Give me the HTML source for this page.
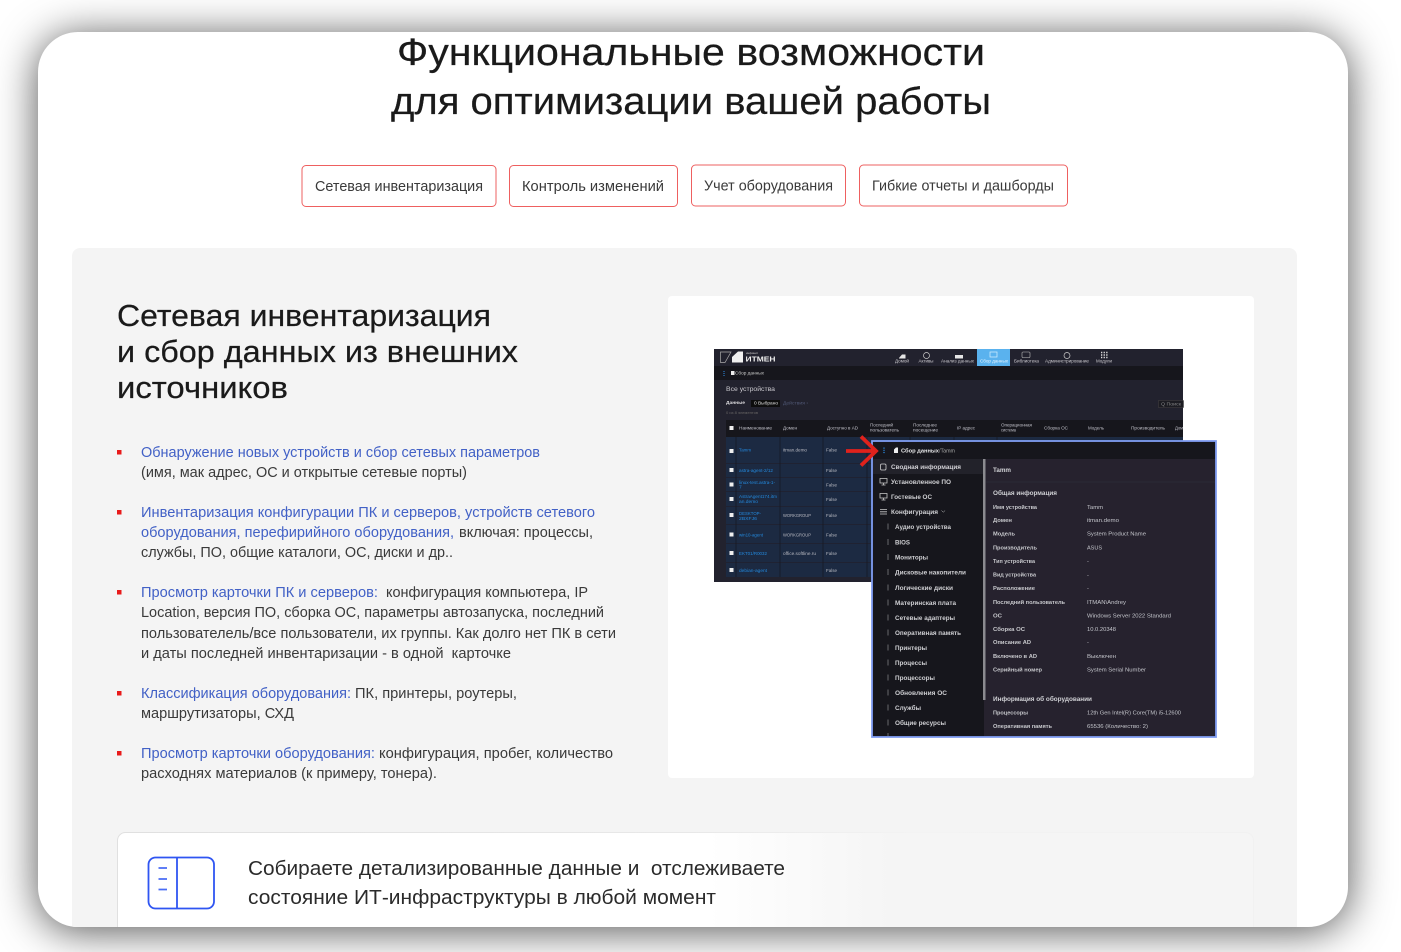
<!DOCTYPE html>
<html lang="ru"><head><meta charset="utf-8"><title>Функциональные возможности</title>
<style>
html,body{margin:0;padding:0;width:1401px;height:952px;overflow:hidden;background:#fff}
#card{position:absolute;left:38px;top:32px;width:1310px;height:895px;border-radius:40px;background:#fff;box-shadow:0 4px 42px rgba(0,0,0,.68)}
svg{position:absolute;left:0;top:0}
text{font-family:"Liberation Sans","Noto Sans CJK SC",sans-serif}
.h{fill:#1a1a1a;stroke:#1a1a1a;stroke-width:.22}
.t{font-size:14.5px;fill:#3a3a3a}
.b{font-size:14.5px;fill:#4261c6}
.s{font-size:6.4px;fill:#cfcfd3;font-weight:700}
.l{font-size:5.6px;fill:#c8c8cc;font-weight:700}
.v{font-size:5.7px;fill:#c4c4ca}
.m{font-size:4.6px;fill:#c8c8ce}
.th{font-size:4.4px;fill:#c0c0c8}
.r{font-size:4.9px;fill:#2488dc}
.c{font-size:4.9px;fill:#b8b8c0}
</style></head><body>
<div id="card"></div>
<svg width="1401" height="952" viewBox="0 0 1401 952" xmlns="http://www.w3.org/2000/svg">
<defs>
<clipPath id="cc"><rect x="38" y="32" width="1310" height="895" rx="40"/></clipPath>
<linearGradient id="fd" x1="0" x2="1" y1="0" y2="0"><stop offset="0" stop-color="#fff"/><stop offset=".52" stop-color="#fff"/><stop offset=".68" stop-color="#f5f5f5"/><stop offset="1" stop-color="#f5f5f5"/></linearGradient>
<linearGradient id="fs" x1="0" x2="1" y1="0" y2="0"><stop offset="0" stop-color="#e0e0e0"/><stop offset=".5" stop-color="#e8e8e8"/><stop offset=".7" stop-color="#f3f3f3"/><stop offset="1" stop-color="#f1f1f1"/></linearGradient>
<filter id="bl" x="-2%" y="-2%" width="104%" height="104%"><feGaussianBlur stdDeviation=".36"/></filter>
</defs>
<g clip-path="url(#cc)">
<rect x="72" y="248" width="1225" height="700" rx="8" fill="#f4f4f4"/>
<rect x="668" y="296" width="586" height="482" rx="4" fill="#fff"/>
<rect x="117.500" y="832.500" width="1136" height="120" rx="8" fill="url(#fd)" stroke="url(#fs)"/>
</g>

<!-- Title -->
<text class="h" x="397" y="65" font-size="38" textLength="588" lengthAdjust="spacingAndGlyphs">Функциональные возможности</text>
<text class="h" x="391" y="114" font-size="38" textLength="600" lengthAdjust="spacingAndGlyphs">для оптимизации вашей работы</text>

<!-- Tabs -->
<g fill="#fff" stroke="#ee6060" stroke-width="1">
<rect x="302" y="165.500" width="194" height="41" rx="4"/>
<rect x="509.500" y="165.500" width="168" height="41" rx="4"/>
<rect x="691.500" y="165" width="154" height="41" rx="4"/>
<rect x="859.500" y="165" width="208" height="41" rx="4"/>
</g>
<g font-size="14.500" fill="#3a3a3a">
<text x="315" y="191" textLength="168" lengthAdjust="spacingAndGlyphs">Сетевая инвентаризация</text>
<text x="522" y="191" textLength="142" lengthAdjust="spacingAndGlyphs">Контроль изменений</text>
<text x="704" y="190.500" textLength="129" lengthAdjust="spacingAndGlyphs">Учет оборудования</text>
<text x="872" y="190.500" textLength="182" lengthAdjust="spacingAndGlyphs">Гибкие отчеты и дашборды</text>
</g>

<!-- Section heading -->
<text class="h" x="117" y="326" font-size="31" textLength="374" lengthAdjust="spacingAndGlyphs">Сетевая инвентаризация</text>
<text class="h" x="117" y="362" font-size="31" textLength="401" lengthAdjust="spacingAndGlyphs">и сбор данных из внешних</text>
<text class="h" x="117" y="398" font-size="31" textLength="171" lengthAdjust="spacingAndGlyphs">источников</text>

<!-- Bullets -->
<g fill="#e81a1a">
<rect x="117" y="450" width="4.500" height="4.500"/>
<rect x="117" y="510" width="4.500" height="4.500"/>
<rect x="117" y="590" width="4.500" height="4.500"/>
<rect x="117" y="691" width="4.500" height="4.500"/>
<rect x="117" y="751" width="4.500" height="4.500"/>
</g>

<!-- List -->
<text class="b" x="141" y="457" textLength="399" lengthAdjust="spacingAndGlyphs">Обнаружение новых устройств и сбор сетевых параметров</text>
<text class="t" x="141" y="477" textLength="326" lengthAdjust="spacingAndGlyphs">(имя, мак адрес, ОС и открытые сетевые порты)</text>
<text class="b" x="141" y="517" textLength="454" lengthAdjust="spacingAndGlyphs">Инвентаризация конфигурации ПК и серверов, устройств сетевого</text>
<text class="b" x="141" y="537" textLength="313" lengthAdjust="spacingAndGlyphs">оборудования, перефирийного оборудования,</text>
<text class="t" x="459" y="537" textLength="134" lengthAdjust="spacingAndGlyphs">включая: процессы,</text>
<text class="t" x="141" y="557" textLength="312" lengthAdjust="spacingAndGlyphs">службы, ПО, общие каталоги, ОС, диски и др..</text>
<text class="b" x="141" y="597" textLength="237" lengthAdjust="spacingAndGlyphs">Просмотр карточки ПК и серверов:</text>
<text class="t" x="386" y="597" textLength="202" lengthAdjust="spacingAndGlyphs">конфигурация компьютера, IP</text>
<text class="t" x="141" y="617" textLength="463" lengthAdjust="spacingAndGlyphs">Location, версия ПО, сборка ОС, параметры автозапуска, последний</text>
<text class="t" x="141" y="638" textLength="475" lengthAdjust="spacingAndGlyphs">пользователель/все пользователи, их группы. Как долго нет ПК в сети</text>
<text class="t" x="141" y="658" textLength="370" lengthAdjust="spacingAndGlyphs" xml:space="preserve">и даты последней инвентаризации - в одной  карточке</text>
<text class="b" x="141" y="698" textLength="210" lengthAdjust="spacingAndGlyphs">Классификация оборудования:</text>
<text class="t" x="355" y="698" textLength="162" lengthAdjust="spacingAndGlyphs">ПК, принтеры, роутеры,</text>
<text class="t" x="141" y="718" textLength="153" lengthAdjust="spacingAndGlyphs">маршрутизаторы, СХД</text>
<text class="b" x="141" y="758" textLength="234" lengthAdjust="spacingAndGlyphs">Просмотр карточки оборудования:</text>
<text class="t" x="379" y="758" textLength="234" lengthAdjust="spacingAndGlyphs">конфигурация, пробег, количество</text>
<text class="t" x="141" y="778" textLength="296" lengthAdjust="spacingAndGlyphs">расходнях материалов (к примеру, тонера).</text>

<!-- Bottom card -->
<g fill="none" stroke="#2f55f2" stroke-width="1.800">
<rect x="148.500" y="857.500" width="65.500" height="51" rx="7"/>
<path d="M177 857.500V908.500"/>
<path d="M158.500 868H167M158.500 879H167M158.500 889.500H167" stroke="#4a6cf5"/>
</g>
<text x="248" y="875" font-size="20.500" fill="#2b2b2b" textLength="537" lengthAdjust="spacingAndGlyphs" xml:space="preserve">Собираете детализированные данные и  отслеживаете</text>
<text x="248" y="904" font-size="20.500" fill="#2b2b2b" textLength="468" lengthAdjust="spacingAndGlyphs">состояние ИТ-инфраструктуры в любой момент</text>

<!-- Screenshot mock -->
<g filter="url(#bl)">
<!-- back window -->
<rect x="714" y="349" width="469" height="233" fill="#24222d"/>
<rect x="714" y="366" width="469" height="14" fill="#15161b"/>
<rect x="977" y="349" width="33" height="17" fill="#5ab2ee"/>
<!-- logo -->
<path d="M720.500 362.500V352H731L725 362.500Z" fill="none" stroke="#aaa" stroke-width=".7"/>
<path d="M732 357L738 351.500H743V362.500H732Z" fill="#f0f0f0"/>
<text x="746" y="354" font-size="3" fill="#ccc">инфинит</text>
<text x="745.500" y="361.500" font-size="7" fill="#eee" font-weight="700" textLength="30" lengthAdjust="spacingAndGlyphs">ИТМЕН</text>
<!-- nav -->
<g fill="#e6e6e6"><path d="M899 358L902 354.500L905.500 354.500V358.500H899Z"/><rect x="955" y="355" width="8" height="3.500"/></g>
<circle cx="926.500" cy="355.500" r="3" fill="none" stroke="#ccc" stroke-width=".7"/>
<rect x="990" y="352" width="7" height="5" fill="none" stroke="#d8f0ff" stroke-width=".7"/>
<rect x="1022" y="352" width="8" height="5.500" rx="1" fill="none" stroke="#bbb" stroke-width=".6"/>
<circle cx="1067" cy="355.500" r="3" fill="none" stroke="#ccc" stroke-width=".7"/>
<path d="M1101 352.500h6.500M1101 355h6.500M1101 357.500h6.500" stroke="#ddd" stroke-width="1.400" stroke-dasharray="1.300 1.300"/>
<text class="m" x="895" y="362.500" textLength="14" lengthAdjust="spacingAndGlyphs">Домой</text>
<text class="m" x="918.500" y="362.500" textLength="15" lengthAdjust="spacingAndGlyphs">Активы</text>
<text class="m" x="941" y="362.500" textLength="33" lengthAdjust="spacingAndGlyphs">Анализ данных</text>
<text class="m" x="980" y="362.500" textLength="28" lengthAdjust="spacingAndGlyphs" style="fill:#e8f6ff">Сбор данных</text>
<text class="m" x="1014" y="362.500" textLength="25" lengthAdjust="spacingAndGlyphs">Библиотека</text>
<text class="m" x="1045" y="362.500" textLength="44" lengthAdjust="spacingAndGlyphs">Администрирование</text>
<text class="m" x="1096" y="362.500" textLength="16" lengthAdjust="spacingAndGlyphs">Модули</text>
<path d="M724 371v5" stroke="#2f8fe8" stroke-width="1" stroke-dasharray="1 1"/>
<rect x="731" y="371" width="3.500" height="4" fill="#eee"/>
<text x="735" y="374.500" font-size="4.800" fill="#ccc" textLength="29" lengthAdjust="spacingAndGlyphs">Сбор данных</text>
<text x="726" y="391" font-size="6.800" fill="#c8c8ce" textLength="49" lengthAdjust="spacingAndGlyphs">Все устройства</text>
<text x="726" y="404" font-size="4.600" fill="#d8d8dc" font-weight="700" textLength="19" lengthAdjust="spacingAndGlyphs">Данные</text>
<rect x="751" y="400" width="29" height="7" fill="#111"/>
<text x="754" y="404.500" font-size="4.400" fill="#ddd" textLength="24" lengthAdjust="spacingAndGlyphs">0 Выбрано</text>
<text x="783" y="404.500" font-size="4.400" fill="#4f5a78" textLength="25" lengthAdjust="spacingAndGlyphs">Действия  ›</text>
<rect x="1158.500" y="400.500" width="25" height="7" fill="#1a1a22" stroke="#444" stroke-width=".5"/>
<text x="1161" y="405.500" font-size="4.400" fill="#888" textLength="20" lengthAdjust="spacingAndGlyphs">Q Поиск</text>
<text x="726" y="414" font-size="4" fill="#666" textLength="32" lengthAdjust="spacingAndGlyphs">0 из 8 элементов</text>
<!-- table -->
<rect x="726" y="420" width="457" height="17" fill="#15151c"/>
<rect x="729.500" y="426" width="4" height="4" fill="#eee"/>
<text class="th" x="739" y="429.500" textLength="33" lengthAdjust="spacingAndGlyphs">Наименование</text>
<text class="th" x="783" y="429.500" textLength="14" lengthAdjust="spacingAndGlyphs">Домен</text>
<text class="th" x="827" y="429.500" textLength="31" lengthAdjust="spacingAndGlyphs">Доступно в AD</text>
<text class="th" x="870" y="426.500" textLength="23" lengthAdjust="spacingAndGlyphs">Последний</text><text class="th" x="870" y="431.500" textLength="29" lengthAdjust="spacingAndGlyphs">пользователь</text>
<text class="th" x="913" y="426.500" textLength="24" lengthAdjust="spacingAndGlyphs">Последнее</text><text class="th" x="913" y="431.500" textLength="25" lengthAdjust="spacingAndGlyphs">посещение</text>
<text class="th" x="957" y="429.500" textLength="18" lengthAdjust="spacingAndGlyphs">IP адрес</text>
<text class="th" x="1001" y="426.500" textLength="31" lengthAdjust="spacingAndGlyphs">Операционная</text><text class="th" x="1001" y="431.500" textLength="15" lengthAdjust="spacingAndGlyphs">система</text>
<text class="th" x="1044" y="429.500" textLength="24" lengthAdjust="spacingAndGlyphs">Сборка ОС</text>
<text class="th" x="1088" y="429.500" textLength="16" lengthAdjust="spacingAndGlyphs">Модель</text>
<text class="th" x="1131" y="429.500" textLength="34" lengthAdjust="spacingAndGlyphs">Производитель</text>
<text class="th" x="1175" y="429.500" textLength="8" lengthAdjust="spacingAndGlyphs">Дом</text>
<g fill="#1b2a42">
<rect x="726" y="437" width="457" height="26"/>
<rect x="726" y="463.800" width="457" height="13.400"/>
<rect x="726" y="478" width="457" height="13.200"/>
<rect x="726" y="492" width="457" height="14.200"/>
<rect x="726" y="507" width="457" height="17.200"/>
<rect x="726" y="525" width="457" height="18.200"/>
<rect x="726" y="544" width="457" height="18.200"/>
<rect x="726" y="563" width="457" height="14"/>
</g>
<g stroke="#15151c" stroke-width=".6"><path d="M736 437V577M780 437V577M823 437V577M867 437V577M910 437V577M954 437V577M997 437V577"/></g>
<g fill="#eee"><rect x="729.500" y="449" width="4" height="4"/><rect x="729.500" y="468" width="4" height="4"/><rect x="729.500" y="482.500" width="4" height="4"/><rect x="729.500" y="497" width="4" height="4"/><rect x="729.500" y="513" width="4" height="4"/><rect x="729.500" y="532.500" width="4" height="4"/><rect x="729.500" y="551" width="4" height="4"/><rect x="729.500" y="568" width="4" height="4"/></g>
<text class="r" x="739" y="451.500" textLength="12" lengthAdjust="spacingAndGlyphs">Tamm</text>
<text class="r" x="739" y="472" textLength="34" lengthAdjust="spacingAndGlyphs">astra-agent-2/12</text>
<text class="r" x="739" y="484" textLength="36" lengthAdjust="spacingAndGlyphs">linux-test.astra-1-</text><text class="r" x="739" y="488.500">7</text>
<text class="r" x="739" y="498" textLength="38" lengthAdjust="spacingAndGlyphs">AstraAgent174.itm</text><text class="r" x="739" y="503" textLength="19" lengthAdjust="spacingAndGlyphs">an.demo</text>
<text class="r" x="739" y="515" textLength="22" lengthAdjust="spacingAndGlyphs">DESKTOP-</text><text class="r" x="739" y="520" textLength="18" lengthAdjust="spacingAndGlyphs">2BXFJ6</text>
<text class="r" x="739" y="536.500" textLength="24" lengthAdjust="spacingAndGlyphs">win10-agent</text>
<text class="r" x="739" y="555" textLength="28" lengthAdjust="spacingAndGlyphs">EKT01/R0032</text>
<text class="r" x="739" y="572" textLength="28" lengthAdjust="spacingAndGlyphs">debian-agent</text>
<text class="c" x="783" y="451.500" textLength="24" lengthAdjust="spacingAndGlyphs">itman.demo</text>
<text class="c" x="783" y="517" textLength="28" lengthAdjust="spacingAndGlyphs">WORKGROUP</text>
<text class="c" x="783" y="536.500" textLength="28" lengthAdjust="spacingAndGlyphs">WORKGROUP</text>
<text class="c" x="783" y="555" textLength="33" lengthAdjust="spacingAndGlyphs">office.softline.ru</text>
<text class="c" x="826" y="451.500" textLength="11" lengthAdjust="spacingAndGlyphs">False</text><text class="c" x="826" y="472" textLength="11" lengthAdjust="spacingAndGlyphs">False</text><text class="c" x="826" y="486.500" textLength="11" lengthAdjust="spacingAndGlyphs">False</text><text class="c" x="826" y="501" textLength="11" lengthAdjust="spacingAndGlyphs">False</text><text class="c" x="826" y="517" textLength="11" lengthAdjust="spacingAndGlyphs">False</text><text class="c" x="826" y="536.500" textLength="11" lengthAdjust="spacingAndGlyphs">False</text><text class="c" x="826" y="555" textLength="11" lengthAdjust="spacingAndGlyphs">False</text><text class="c" x="826" y="572" textLength="11" lengthAdjust="spacingAndGlyphs">False</text>

<!-- front window -->
<rect x="872" y="441" width="344" height="296" fill="#25232f" stroke="#7f9df2" stroke-width="1.800"/>
<rect x="873" y="442" width="342" height="17" fill="#14151a"/>
<rect x="873" y="459" width="111" height="277" fill="#14151a"/>
<rect x="873" y="459" width="111" height="15" fill="#23222c"/>
<rect x="983" y="459" width="2.500" height="241" fill="#8b8b90"/>
<path d="M884 447.500v6.500" stroke="#2f8fe8" stroke-width="1.200" stroke-dasharray="1.200 1"/>
<path d="M894 449.500L896 447.500H898V453H894Z" fill="#eee"/>
<text x="901" y="452.500" font-size="5.700" fill="#e8e8ea" font-weight="700" textLength="38" lengthAdjust="spacingAndGlyphs">Сбор данных</text>
<text x="939" y="452.500" font-size="5.700" fill="#aaa" textLength="16" lengthAdjust="spacingAndGlyphs">/Tamm</text>
<!-- sidebar icons -->
<g fill="none" stroke="#ccc" stroke-width=".8">
<rect x="880.500" y="464" width="5.500" height="6" rx="1.300"/>
<path d="M880 478.500h7v4.500h-7zM883.500 483v2M881.500 485h4"/>
<path d="M880 493.500h7v4.500h-7zM883.500 498v2M881.500 500h4"/>
<path d="M880 509.500h7M880 511.800h7M880 514h7"/>
<path d="M941.500 510.500l1.800 1.800 1.800-1.800" stroke-width=".5"/>
</g>
<text class="s" x="891" y="469" textLength="70" lengthAdjust="spacingAndGlyphs">Сводная информация</text>
<text class="s" x="891" y="484" textLength="60" lengthAdjust="spacingAndGlyphs">Установленное ПО</text>
<text class="s" x="891" y="499" textLength="41" lengthAdjust="spacingAndGlyphs">Гостевые ОС</text>
<text class="s" x="891" y="514" textLength="47" lengthAdjust="spacingAndGlyphs">Конфигурация</text>
<text class="s" x="895" y="529" textLength="56" lengthAdjust="spacingAndGlyphs">Аудио устройства</text>
<text class="s" x="895" y="544.500" textLength="15" lengthAdjust="spacingAndGlyphs">BIOS</text>
<text class="s" x="895" y="559.500" textLength="33" lengthAdjust="spacingAndGlyphs">Мониторы</text>
<text class="s" x="895" y="574.500" textLength="71" lengthAdjust="spacingAndGlyphs">Дисковые накопители</text>
<text class="s" x="895" y="590" textLength="58" lengthAdjust="spacingAndGlyphs">Логические диски</text>
<text class="s" x="895" y="605" textLength="61" lengthAdjust="spacingAndGlyphs">Материнская плата</text>
<text class="s" x="895" y="620" textLength="60" lengthAdjust="spacingAndGlyphs">Сетевые адаптеры</text>
<text class="s" x="895" y="635" textLength="66" lengthAdjust="spacingAndGlyphs">Оперативная память</text>
<text class="s" x="895" y="650" textLength="32" lengthAdjust="spacingAndGlyphs">Принтеры</text>
<text class="s" x="895" y="665" textLength="32" lengthAdjust="spacingAndGlyphs">Процессы</text>
<text class="s" x="895" y="680" textLength="40" lengthAdjust="spacingAndGlyphs">Процессоры</text>
<text class="s" x="895" y="695" textLength="52" lengthAdjust="spacingAndGlyphs">Обновления ОС</text>
<text class="s" x="895" y="710" textLength="26" lengthAdjust="spacingAndGlyphs">Службы</text>
<text class="s" x="895" y="725" textLength="51" lengthAdjust="spacingAndGlyphs">Общие ресурсы</text>
<path d="M888 523.500v6M888 539v6M888 554v6M888 569v6M888 584.500v6M888 599.500v6M888 614.500v6M888 629.500v6M888 644.500v6M888 659.500v6M888 674.500v6M888 689.500v6M888 704.500v6M888 719.500v6M888 733v3" stroke="#8a8a90" stroke-width=".7"/>
<!-- right panel -->
<text x="993" y="472" font-size="6.800" fill="#d0d0d4" font-weight="700" textLength="18" lengthAdjust="spacingAndGlyphs">Tamm</text>
<path d="M986 482H1215" stroke="#2f2d3a" stroke-width=".8"/>
<text x="993" y="495" font-size="6" fill="#d0d0d4" font-weight="700" textLength="64" lengthAdjust="spacingAndGlyphs">Общая информация</text>
<text class="l" x="993" y="509" textLength="44" lengthAdjust="spacingAndGlyphs">Имя устройства</text>
<text class="l" x="993" y="522" textLength="19" lengthAdjust="spacingAndGlyphs">Домен</text>
<text class="l" x="993" y="535.500" textLength="22" lengthAdjust="spacingAndGlyphs">Модель</text>
<text class="l" x="993" y="549.500" textLength="44" lengthAdjust="spacingAndGlyphs">Производитель</text>
<text class="l" x="993" y="563" textLength="42" lengthAdjust="spacingAndGlyphs">Тип устройства</text>
<text class="l" x="993" y="576.500" textLength="43" lengthAdjust="spacingAndGlyphs">Вид устройства</text>
<text class="l" x="993" y="590" textLength="42" lengthAdjust="spacingAndGlyphs">Расположение</text>
<text class="l" x="993" y="604" textLength="72" lengthAdjust="spacingAndGlyphs">Последний пользователь</text>
<text class="l" x="993" y="617.500" textLength="9" lengthAdjust="spacingAndGlyphs">ОС</text>
<text class="l" x="993" y="631" textLength="32" lengthAdjust="spacingAndGlyphs">Сборка ОС</text>
<text class="l" x="993" y="644" textLength="38" lengthAdjust="spacingAndGlyphs">Описание AD</text>
<text class="l" x="993" y="658" textLength="44" lengthAdjust="spacingAndGlyphs">Включено в AD</text>
<text class="l" x="993" y="671.500" textLength="49" lengthAdjust="spacingAndGlyphs">Серийный номер</text>
<text x="993" y="701" font-size="6" fill="#d0d0d4" font-weight="700" textLength="99" lengthAdjust="spacingAndGlyphs">Информация об оборудовании</text>
<text class="l" x="993" y="714.500" textLength="35" lengthAdjust="spacingAndGlyphs">Процессоры</text>
<text class="l" x="993" y="728" textLength="59" lengthAdjust="spacingAndGlyphs">Оперативная память</text>
<text class="v" x="1087" y="509" textLength="16" lengthAdjust="spacingAndGlyphs">Tamm</text>
<text class="v" x="1087" y="522" textLength="32" lengthAdjust="spacingAndGlyphs">itman.demo</text>
<text class="v" x="1087" y="535.500" textLength="59" lengthAdjust="spacingAndGlyphs">System Product Name</text>
<text class="v" x="1087" y="549.500" textLength="15" lengthAdjust="spacingAndGlyphs">ASUS</text>
<text class="v" x="1087" y="563">-</text>
<text class="v" x="1087" y="576.500">-</text>
<text class="v" x="1087" y="590">-</text>
<text class="v" x="1087" y="604" textLength="39" lengthAdjust="spacingAndGlyphs">ITMAN\Andrey</text>
<text class="v" x="1087" y="617.500" textLength="84" lengthAdjust="spacingAndGlyphs">Windows Server 2022 Standard</text>
<text class="v" x="1087" y="631" textLength="29" lengthAdjust="spacingAndGlyphs">10.0.20348</text>
<text class="v" x="1087" y="644">-</text>
<text class="v" x="1087" y="658" textLength="29" lengthAdjust="spacingAndGlyphs">Выключен</text>
<text class="v" x="1087" y="671.500" textLength="59" lengthAdjust="spacingAndGlyphs">System Serial Number</text>
<text class="v" x="1087" y="714.500" textLength="94" lengthAdjust="spacingAndGlyphs">12th Gen Intel(R) Core(TM) i5-12600</text>
<text class="v" x="1087" y="728" textLength="61" lengthAdjust="spacingAndGlyphs">65536 (Количество: 2)</text>
<!-- arrow -->
<path d="M846 451H875M861 436.500L876 451L861 465.500" fill="none" stroke="#e0201e" stroke-width="3.800"/>
</g>
</svg>
</body></html>
